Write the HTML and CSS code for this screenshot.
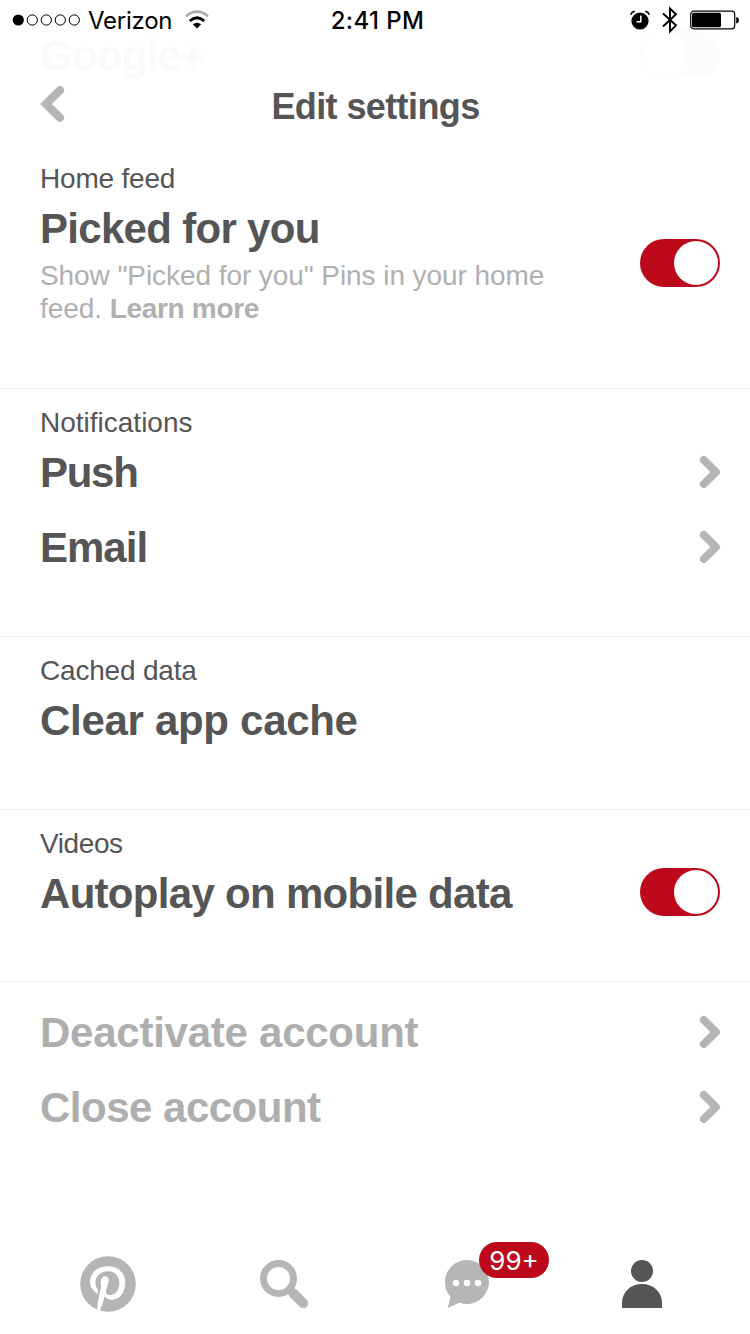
FILE: index.html
```html
<!DOCTYPE html>
<html lang="en">
<head>
<meta charset="utf-8">
<title>Edit settings</title>
<link rel="stylesheet" href="styles.css">
</head>
<body>
<div class="screen">
  <div class="ghost"><span class="ghost-label">Google+</span><span class="ghost-toggle"></span></div>
  <header class="status">
    <div class="carrier">
      <svg width="70" height="14" viewBox="0 0 70 14"><circle cx="6.3" cy="7" r="5.6"/><g fill="none" stroke="#000"><circle cx="20.3" cy="7" r="5.1"/><circle cx="34.3" cy="7" r="5.1"/><circle cx="48.3" cy="7" r="5.1"/><circle cx="62.3" cy="7" r="5.1"/></g></svg>
      <span class="carrier-name">Verizon</span>
      <svg class="wifi" width="24" height="20" viewBox="0 0 24 20"><g fill="none"><path d="M1 6.200Q12-2.800 23 6.200" stroke="#aaa" stroke-width="2.600"/><path d="M4.800 11Q12 4.500 19.200 11" stroke="#000" stroke-width="2.900"/></g><path d="M7.800 14.300Q12 11.200 16.200 14.300L12 18.500Z"/></svg>
    </div>
    <span class="clock">2:41 PM</span>
    <div class="indicators">
      <svg width="20" height="20" viewBox="0 0 20 20"><circle cx="10" cy="11" r="8.600"/><path d="M.8 4.800Q1.500 1.800 4.800 1.300M19.200 4.800Q18.500 1.800 15.200 1.300" fill="none" stroke="#000" stroke-width="1.500"/><path d="M10.800 5.500V11.800H6.500" fill="none" stroke="#fff" stroke-width="1.500"/></svg>
      <svg width="16" height="28" viewBox="0 0 16 28"><path d="M1 7.500L14 19.300L8 25.500V2.500L14 8.200L1 20.500" fill="none" stroke="#000" stroke-width="1.900"/></svg>
      <svg width="50" height="20" viewBox="0 0 50 20"><rect x=".7" y="1.200" width="44" height="17.600" rx="3" fill="none" stroke="#000" stroke-width="1.200"/><rect x="2" y="2.800" width="29" height="14.500" rx="1.500"/><path d="M46.200 7Q49 7.500 49 10Q49 12.800 46.200 13.500Z"/></svg>
    </div>
  </header>
  <nav class="nav">
    <svg class="back" width="26" height="38" viewBox="0 0 26 38"><path d="M20 5.300L6 19L20 32.700" fill="none" stroke="#b5b5b5" stroke-width="8.200" stroke-linecap="round"/></svg>
    <h1 class="title">Edit settings</h1>
  </nav>
  <main class="content">
    <section class="section section-feed">
      <div class="feed-text">
        <h2 class="label">Home feed</h2>
        <div class="feed-heading heading picked">Picked for you</div>
        <p class="description"><span class="line-one">Show "Picked for you" Pins in your home</span><br>feed. <b class="learn">Learn more</b></p>
      </div>
      <div class="toggle"><span class="knob"></span></div>
    </section>
    <section class="section">
      <h2 class="label notifications">Notifications</h2>
      <div class="row"><span class="heading push">Push</span><svg class="chevron" viewBox="0 0 22 34"><path d="M4.800 5L17 17L4.800 29" /></svg></div>
      <div class="row"><span class="heading email">Email</span><svg class="chevron" viewBox="0 0 22 34"><path d="M4.800 5L17 17L4.800 29" /></svg></div>
    </section>
    <section class="section">
      <h2 class="label">Cached data</h2>
      <div class="row"><span class="heading clear">Clear app cache</span></div>
    </section>
    <section class="section section-video">
      <h2 class="label videos">Videos</h2>
      <div class="row"><span class="heading autoplay">Autoplay on mobile data</span><div class="toggle"><span class="knob"></span></div></div>
    </section>
    <section class="section section-account">
      <div class="row"><span class="heading deactivate">Deactivate account</span><svg class="chevron" viewBox="0 0 22 34"><path d="M4.800 5L17 17L4.800 29" /></svg></div>
      <div class="row"><span class="heading close">Close account</span><svg class="chevron" viewBox="0 0 22 34"><path d="M4.800 5L17 17L4.800 29" /></svg></div>
    </section>
  </main>
  <footer class="tabs">
    <svg width="56" height="56" viewBox="0 0 56 56"><circle cx="28" cy="28" r="27.800" fill="#b5b5b5"/><path d="M17.800 38C12.500 34.500 10 30.500 10 25.500C10 17 17.700 10.300 28 10.300C38 10.300 45.300 17 45.300 26.500C45.300 36.500 39.500 43.700 32 43.700C28.500 43.700 25.800 42.200 24.500 40.300C23 46.500 22.300 50 19.800 54.700L17.200 53.600C17.500 46 19 39.500 21.300 30.500C19.800 25 21.500 20.300 25 20.300C28 20.300 29.200 22.800 28.400 26.200L26 34.700C25.500 37.500 27.200 39 30 39C35.700 39 39.300 33.500 39.300 27C39.300 19.500 34.700 15.200 27.700 15.200C20.300 15.200 15.400 20.300 15.400 27C15.400 29.800 16.300 31.600 17.400 33C18 33.700 18 34.300 17.800 35Z" fill="#fff"/></svg>
    <svg class="search" width="50" height="50" viewBox="0 0 50 50"><circle cx="18.500" cy="18.500" r="15" fill="none" stroke="#b6b6b7" stroke-width="7"/><path d="M33.500 33.500L43.200 43.200" stroke="#b6b6b7" stroke-width="10" stroke-linecap="round"/></svg>
    <div class="messages">
      <svg width="46" height="50" viewBox="0 0 46 50"><path d="M22 0A22 22 0 1 1 14.500 42.700L2.800 48L5.500 36.700A22 22 0 0 1 22 0Z" fill="#b6b6b7"/><g fill="#fff"><circle cx="11" cy="23" r="3.200"/><circle cx="22" cy="23" r="3.200"/><circle cx="33" cy="23" r="3.200"/></g></svg>
      <span class="badge">99+</span>
    </div>
    <svg class="profile" width="40" height="48" viewBox="0 0 40 48"><circle cx="20" cy="11" r="11" fill="#555"/><path d="M0 48V43C0 32 8.500 24 20 24S40 32 40 43V48Z" fill="#555"/></svg>
  </footer>
</div>
</body>
</html>
```
FILE: styles.css
```css
* { box-sizing: border-box; }
body { margin: 0; background: #fff; font-family: "Liberation Sans", Arial, sans-serif; color: #555; }
h1, h2, p { margin: 0; }
svg { display: block; flex: none; }
.screen { position: relative; width: 750px; height: 1334px; display: flex; flex-direction: column; background: #fff; overflow: hidden; }

/* Row scrolled beneath the translucent header */
.ghost { position: absolute; top: 18px; left: 40px; right: 30px; height: 75px; display: flex; justify-content: space-between; }
.ghost-label { font-size: 42px; font-weight: 700; line-height: 75px; color: #fafafa; letter-spacing: -.7px; }
.ghost-toggle { width: 80px; height: 48px; margin-top: 12px; border-radius: 24px; border: 1px solid #fcfcfc; background: radial-gradient(circle 22px at 23px 23px, #fff 22px, #fcfcfc 23px); }

.status { position: relative; display: grid; grid-template-columns: 1fr auto 1fr; height: 40px; padding: 0 10px 0 12px; align-items: center; color: #000; font-family: Inter, sans-serif; font-size: 24px; line-height: 40px; }
.carrier { display: flex; align-items: center; }
.carrier-name { margin-left: 6px; letter-spacing: -.25px; padding-top: 2px; line-height: 38px; }
.wifi { margin-left: 13px; }
.clock { font-weight: 500; letter-spacing: .4px; padding: 2px 0 0 3px; line-height: 38px; }
.indicators { display: flex; align-items: center; justify-content: flex-end; gap: 12px; }

.nav { position: relative; height: 113px; padding-left: 40px; }
.back { margin-top: 45px; }
.title { margin: -36px 0 0 -39px; text-align: center; font-size: 36px; line-height: 40px; letter-spacing: -.6px; }

.content { flex: 1; }
.section { border-top: 1px solid #ededed; padding: 21px 30px 51px 40px; }
.section-feed { height: 235px; border: 0; padding: 13px 30px 0 40px; display: flex; justify-content: space-between; }
.section-feed .toggle { margin-top: 73px; }
.section-video { padding-bottom: 50px; }
.section-account { padding-top: 13px; }
.label { font-size: 28px; font-weight: 400; line-height: 26px; letter-spacing: -.2px; margin-bottom: -1px; }
.notifications { letter-spacing: 0; }
.videos { letter-spacing: -.4px; }
.heading { font-size: 42px; font-weight: 700; white-space: nowrap; }
.feed-heading { line-height: 50px; padding-top: 13px; }
.picked { letter-spacing: -.7px; }
.push { letter-spacing: -1.3px; }
.email { letter-spacing: -1px; }
.clear { letter-spacing: -.3px; }
.autoplay { letter-spacing: -.7px; }
.deactivate { letter-spacing: -.25px; }
.close { letter-spacing: -.5px; }
.description { margin-top: 5px; font-size: 28px; line-height: 33px; color: #b0b0b0; white-space: nowrap; letter-spacing: -.07px; }
.learn { letter-spacing: -.3px; }
.row { display: flex; justify-content: space-between; align-items: center; height: 75px; line-height: 75px; }
.section-account .heading { color: #aeaeae; }
.chevron { width: 22px; height: 34px; fill: none; stroke: #b5b5b5; stroke-width: 8px; stroke-linecap: round; stroke-linejoin: round; }
.row .chevron { margin: 0 -1px 2px 0; }

.toggle { flex: none; display: flex; justify-content: flex-end; width: 80px; height: 48px; padding: 2px; border-radius: 24px; background: #bd081c; }
.row .toggle { margin-bottom: 4px; }
.knob { width: 44px; height: 44px; border-radius: 50%; background: #fff; }

.tabs { display: flex; align-items: flex-start; height: 100px; padding: 22px 0 0 80px; }
.search { margin: 4px 0 0 124px; }
.messages { position: relative; margin: 4px 0 0 135px; }
.badge { position: absolute; left: 34px; top: -18px; width: 70px; height: 36px; border-radius: 18px; background: #bd081c; color: #fff; font-family: Inter, sans-serif; font-size: 26px; line-height: 37px; text-align: center; }
.profile { margin: 4px 0 0 131px; }
```
